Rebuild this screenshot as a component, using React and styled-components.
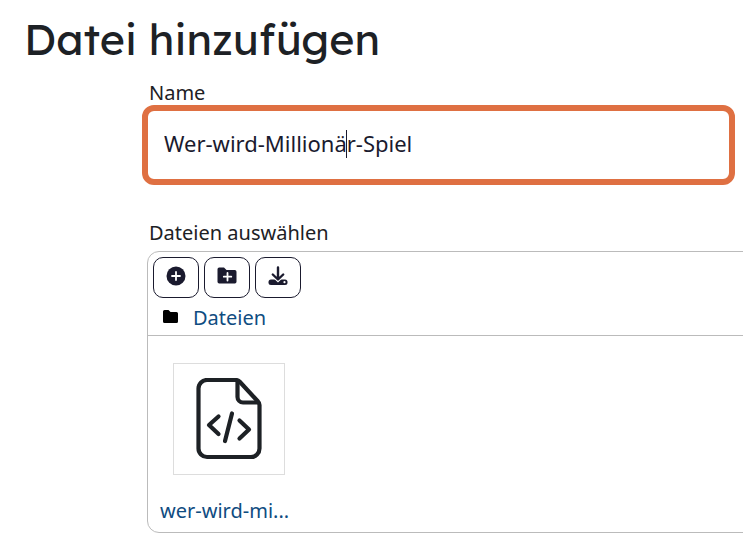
import { useState } from "react";
import styled, { createGlobalStyle } from "styled-components";

const GlobalStyle = createGlobalStyle`
  * {
    box-sizing: border-box;
  }

  body {
    margin: 0;
    background: #ffffff;
    color: #1d2125;
    font-family: "Noto Sans", sans-serif;
    font-size: 20px;
    line-height: 28px;
  }
`;
const Page = styled.main`
  overflow: hidden;
  padding: 12px 8px 8px 24px;
`;
const Title = styled.h1`
  margin: 0;
  font-family: Lexend, Inter, sans-serif;
  font-size: 43px;
  font-weight: 400;
  line-height: 54px;
`;
const Form = styled.form`
  margin-top: 14px;
  padding-left: 118px;
`;
const Label = styled.label`
  display: block;
  padding-left: 7px;
  line-height: 25px;
`;
const NameField = styled.div`
  position: relative;
  margin-bottom: 35px;
`;
const NameInput = styled.input`
  display: block;
  width: 100%;
  height: 80px;
  padding: 0 16px 4px;
  border: 6px solid #df7042;
  border-radius: 12px;
  outline: 0;
  background: #ffffff;
  color: #1a1a2e;
  font-family: inherit;
  font-size: 22px;
`;
const Caret = styled.span`
  position: absolute;
  top: 25px;
  left: 204px;
  width: 1px;
  height: 28px;
  background: #1a1a2e;
`;
const FileManager = styled.section`
  margin: 6px -24px 0 5px;
  border: 1px solid #bbbbbb;
  border-radius: 12px;
`;
const ManagerHeader = styled.div`
  height: 84px;
  padding: 5px;
  border-bottom: 1px solid #bbbbbb;
`;
const Toolbar = styled.div`
  display: flex;
  column-gap: 5px;
`;
const ToolButton = styled.button`
  display: flex;
  align-items: center;
  justify-content: center;
  width: 46px;
  height: 41px;
  padding: 0 0 3px;
  border: 1px solid #1a1a2e;
  border-radius: 10px;
  background: #ffffff;
  color: #1a1a2e;
`;
const Breadcrumb = styled.nav`
  display: flex;
  align-items: center;
  column-gap: 15px;
  padding: 6px 10px 0;

  svg {
    margin-bottom: 4px;
  }
`;
const Link = styled.a`
  color: #0f4c81;
  text-decoration: none;
`;
const FileList = styled.div`
  padding: 27px 12px 7px;
`;
const FileLink = styled(Link)`
  display: block;
  width: 138px;
`;
const Thumbnail = styled.span`
  display: flex;
  align-items: center;
  justify-content: center;
  width: 112px;
  height: 112px;
  margin-left: 13px;
  border: 1px solid #dddddd;
  color: #1d2125;
`;
const FileName = styled.span`
  display: block;
  margin-top: 22px;
`;

const AddFileIcon = () => (
  <svg width="20" height="20" viewBox="0 0 20 20">
    <circle cx="10" cy="10" r="9.5" fill="currentColor" />
    <path d="M10 6v8M6 10h8" stroke="#fff" strokeWidth="1.8" strokeLinecap="round" />
  </svg>
);
const AddFolderIcon = () => (
  <svg width="20" height="20" viewBox="0 0 20 20">
    <path
      d="M2.2 1.5H7L9.5 4h8.3a1.7 1.7 0 0 1 1.7 1.7v10.1a1.7 1.7 0 0 1-1.7 1.7H2.2a1.7 1.7 0 0 1-1.7-1.7V3.2a1.7 1.7 0 0 1 1.7-1.7z"
      fill="currentColor"
    />
    <path d="M10.5 7v7.5M6.8 10.7h7.5" stroke="#fff" strokeWidth="1.8" strokeLinecap="round" />
  </svg>
);
const DownloadIcon = () => (
  <svg width="20" height="20" viewBox="0 0 20 20">
    <rect x="0.5" y="13.5" width="19" height="5.5" rx="2.5" fill="currentColor" />
    <path
      d="M10 1.5V13M4.8 8.5l5.2 5 5.2-5"
      fill="none"
      stroke="#fff"
      strokeWidth="4.5"
    />
    <path
      d="M10 1.5V13M4.8 8.5l5.2 5 5.2-5"
      fill="none"
      stroke="currentColor"
      strokeWidth="2.4"
      strokeLinecap="round"
      strokeLinejoin="round"
    />
    <circle cx="16.5" cy="16.2" r="1.1" fill="#fff" />
  </svg>
);
const FolderIcon = () => (
  <svg width="15" height="13" viewBox="0 0 15 13">
    <path
      d="M1.5 0h4l2 2h6A1.5 1.5 0 0 1 15 3.5v8a1.5 1.5 0 0 1-1.5 1.5h-12A1.5 1.5 0 0 1 0 11.5v-10A1.5 1.5 0 0 1 1.5 0z"
      fill="#000"
    />
  </svg>
);
const CodeFileIcon = () => (
  <svg
    width="66"
    height="82"
    viewBox="0 0 66 82"
    fill="none"
    stroke="currentColor"
    strokeWidth="4.2"
    strokeLinecap="round"
    strokeLinejoin="round"
  >
    <path d="M40 2H11a8.5 8.5 0 0 0-8.5 8.5v60A8.5 8.5 0 0 0 11 79h44a8.5 8.5 0 0 0 8.5-8.5V27a5 5 0 0 0-1.5-3.5l-18.5-20A5 5 0 0 0 40 2z" />
    <path d="M41.5 3v16a5.5 5.5 0 0 0 5.5 5.5h15" />
    <path d="M22.5 38.5 13 47l9.5 9M36 35.5 29 63M43.5 42.5l9.5 9-9.5 9" />
  </svg>
);

const TOOLS = [
  { title: "Datei hinzufügen", Icon: AddFileIcon },
  { title: "Verzeichnis erstellen", Icon: AddFolderIcon },
  { title: "Alle herunterladen", Icon: DownloadIcon },
];

const App = () => {
  const [name, setName] = useState("Wer-wird-Millionär-Spiel");

  return (
    <>
      <GlobalStyle />
      <Page>
        <Title>Datei hinzufügen</Title>

        <Form>
          <Label htmlFor="name">Name</Label>
          <NameField>
            <NameInput
              id="name"
              value={name}
              onChange={(event) => setName(event.target.value)}
            />
            <Caret aria-hidden="true" />
          </NameField>

          <Label as="div" id="files-label">
            Dateien auswählen
          </Label>
          <FileManager aria-labelledby="files-label">
            <ManagerHeader>
              <Toolbar>
                {TOOLS.map(({ title, Icon }) => (
                  <ToolButton key={title} type="button" aria-label={title}>
                    <Icon />
                  </ToolButton>
                ))}
              </Toolbar>
              <Breadcrumb>
                <FolderIcon />
                <Link href="#dateien">Dateien</Link>
              </Breadcrumb>
            </ManagerHeader>

            <FileList>
              <FileLink href="#datei">
                <Thumbnail>
                  <CodeFileIcon />
                </Thumbnail>
                <FileName>wer-wird-mi...</FileName>
              </FileLink>
            </FileList>
          </FileManager>
        </Form>
      </Page>
    </>
  );
};

export default App;
